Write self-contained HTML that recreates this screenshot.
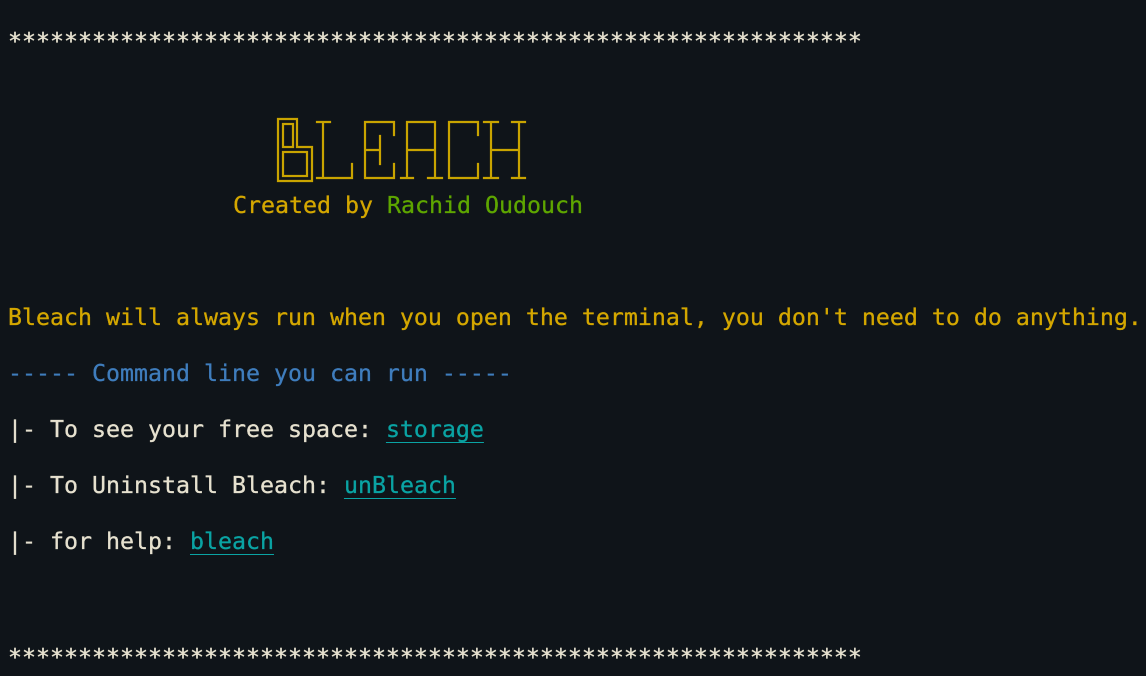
<!DOCTYPE html>
<html><head><meta charset="utf-8"><style>
html,body{margin:0;padding:0;background:#0f1419;width:1146px;height:676px;overflow:hidden}
.l{position:absolute;left:8px;font-family:"DejaVu Sans Mono","Liberation Mono",monospace;font-size:23.25px;line-height:28px;white-space:pre;color:#e6e1cf;-webkit-text-stroke:0.3px currentColor}
.y{color:#d4a700}.g{color:#5ea600}.b{color:#3f7dbd}.c{color:#0aa3a3;text-decoration:underline;text-decoration-thickness:1px;text-underline-offset:5px}
</style></head><body>
<div class="l" style="top:28px">*************************************************************</div>
<svg style="position:absolute;left:0;top:0" width="1146" height="676" fill="none" stroke="#c9a400" stroke-width="2.2" stroke-linecap="square">
<polygon points="278,119 297,119 297,147 312,147 312,181 278,181"/>
<rect x="283" y="124" width="10" height="23"/>
<rect x="283" y="152" width="24" height="24"/>
<path d="M317,122H330M323,122V178M317,178H352V164"/>
<path d="M394,135V122H365V178H394V164M365,150H380M380,136V164"/>
<path d="M407,178V122H435V178M407,150H435M401,178H413M428,178H442"/>
<path d="M478,135V122H449V178H478V164"/>
<path d="M491,122V178M519,122V178M491,150H519M484,122H498M512,122H525M484,178H498M512,178H525"/>
</svg>
<div class="l y" style="top:192px;left:233px">Created by <span class="g">Rachid Oudouch</span></div>
<div class="l y" style="top:304px">Bleach will always run when you open the terminal, you don't need to do anything.</div>
<div class="l b" style="top:360px">----- Command line you can run -----</div>
<div class="l" style="top:416px">|- To see your free space: <span class="c">storage</span></div>
<div class="l" style="top:472px">|- To Uninstall Bleach: <span class="c">unBleach</span></div>
<div class="l" style="top:528px">|- for help: <span class="c">bleach</span></div>
<div class="l" style="top:644px">*************************************************************</div>
</body></html>
